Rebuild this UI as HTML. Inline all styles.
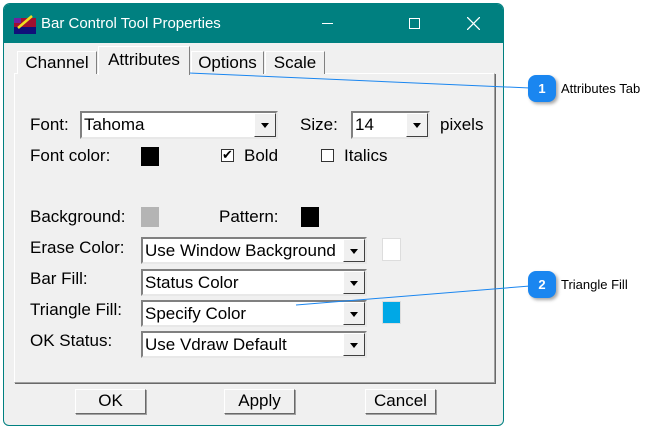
<!DOCTYPE html>
<html><head><style>
*{margin:0;padding:0;box-sizing:border-box}
body{width:657px;height:428px;background:#fff;position:relative;overflow:hidden;font-family:"Liberation Sans",sans-serif;font-size:17px;color:#000}
.a{position:absolute}
.win{left:3px;top:3px;width:501px;height:423px;background:#f0f0f0;border:1px solid #008080;border-radius:7px 7px 6px 6px;overflow:hidden}
.tb{left:0;top:0;width:501px;height:39px;background:#008080;color:#fff}
.t{white-space:nowrap;line-height:18px}
.combo{background:#fff;border:2px solid;border-color:#808080 #e8e8e8 #e8e8e8 #808080}
.combo span{position:absolute;left:2px;top:3px;line-height:18px}
.btn{position:absolute;right:0;top:0;width:22px;height:100%;background:#f0f0f0;border:1px solid;border-color:#fff #404040 #404040 #fff}
.btn:after{content:"";position:absolute;left:6px;top:9px;border-left:4px solid transparent;border-right:4px solid transparent;border-top:5px solid #000}
.pb{background:#f0f0f0;border:1px solid;border-color:#fff #696969 #696969 #fff;box-shadow:1px 1px 0 #a0a0a0;text-align:center;line-height:22px}
.tab{background:#f0f0f0;border:1px solid;border-color:#fff #808080 transparent #fff;border-bottom:none;text-align:center}
.cb{width:13px;height:13px;background:#fff;border:1px solid #333}
.badge{width:28px;height:27px;background:#1a86f0;border-radius:8px;color:#fff;font-weight:bold;font-size:13px;text-align:center;line-height:27px;box-shadow:2px 2px 3px rgba(0,0,0,.35)}
</style></head><body>
<div class="a win">
 <div class="a tb">
  <svg class="a" style="left:10px;top:10px" width="22" height="20"><rect x="0" y="4" width="22" height="16" fill="#a01030"/><rect x="0" y="13" width="22" height="7" fill="#10107a"/><rect x="0" y="4" width="7" height="5" fill="#7020a0"/><line x1="4" y1="14" x2="18" y2="2" stroke="#f0e020" stroke-width="2.5"/></svg>
  <div class="a t" style="left:37px;top:11px;font-size:15px">Bar Control Tool Properties</div>
  <div class="a" style="left:318px;top:19px;width:11px;height:1px;background:#fff"></div>
  <div class="a" style="left:405px;top:14px;width:11px;height:11px;border:1px solid #fff"></div>
  <svg class="a" style="left:463px;top:13px" width="13" height="13"><path d="M0 0L13 13M13 0L0 13" stroke="#fff" stroke-width="1.3"/></svg>
 </div>
 <div class="a" style="left:10px;top:69px;width:481px;height:310px;border:1px solid;border-color:#fff #a0a0a0 #a0a0a0 #fff;box-shadow:1px 1px 0 #696969"></div>
 <div class="a tab t" style="left:13px;top:47px;width:80px;height:23px;line-height:22px">Channel</div>
 <div class="a tab t" style="left:94px;top:42px;width:92px;height:29px;line-height:26px;z-index:2">Attributes</div>
 <div class="a tab t" style="left:187px;top:47px;width:73px;height:23px;line-height:22px">Options</div>
 <div class="a tab t" style="left:261px;top:47px;width:60px;height:23px;line-height:22px">Scale</div>

 <div class="a t" style="left:26px;top:112px">Font:</div>
 <div class="a combo" style="left:76px;top:107px;width:198px;height:28px"><span>Tahoma</span><div class="btn"></div></div>
 <div class="a t" style="left:296px;top:112px">Size:</div>
 <div class="a combo" style="left:347px;top:107px;width:79px;height:28px"><span>14</span><div class="btn"></div></div>
 <div class="a t" style="left:436px;top:112px">pixels</div>

 <div class="a t" style="left:26px;top:143px">Font color:</div>
 <div class="a" style="left:137px;top:143px;width:18px;height:19px;background:#000"></div>
 <div class="a cb" style="left:217px;top:145px"></div>
 <div class="a t" style="left:218px;top:142px;font-size:13px">✔</div>
 <div class="a t" style="left:240px;top:143px">Bold</div>
 <div class="a cb" style="left:317px;top:145px"></div>
 <div class="a t" style="left:340px;top:143px">Italics</div>

 <div class="a t" style="left:26px;top:204px">Background:</div>
 <div class="a" style="left:137px;top:203px;width:18px;height:20px;background:#b4b4b4"></div>
 <div class="a t" style="left:215px;top:204px">Pattern:</div>
 <div class="a" style="left:297px;top:203px;width:18px;height:20px;background:#000"></div>

 <div class="a t" style="left:26px;top:235px">Erase Color:</div>
 <div class="a combo" style="left:137px;top:233px;width:226px;height:27px"><span>Use Window Background</span><div class="btn"></div></div>
 <div class="a" style="left:378px;top:234px;width:19px;height:23px;background:#fff;border:1px solid #ddd"></div>
 <div class="a t" style="left:26px;top:266px">Bar Fill:</div>
 <div class="a combo" style="left:137px;top:265px;width:226px;height:27px"><span>Status Color</span><div class="btn"></div></div>
 <div class="a t" style="left:26px;top:297px">Triangle Fill:</div>
 <div class="a combo" style="left:137px;top:296px;width:226px;height:27px"><span>Specify Color</span><div class="btn"></div></div>
 <div class="a" style="left:378px;top:297px;width:19px;height:23px;background:#00a8e6;border:1px solid #ddd"></div>
 <div class="a t" style="left:26px;top:328px">OK Status:</div>
 <div class="a combo" style="left:137px;top:327px;width:226px;height:27px"><span>Use Vdraw Default</span><div class="btn"></div></div>

 <div class="a pb t" style="left:71px;top:385px;width:71px;height:25px">OK</div>
 <div class="a pb t" style="left:220px;top:385px;width:71px;height:25px">Apply</div>
 <div class="a pb t" style="left:361px;top:385px;width:71px;height:25px">Cancel</div>
</div>
<svg class="a" style="left:0;top:0" width="657" height="428"><line x1="143" y1="71" x2="530" y2="88" stroke="#1a86f0" stroke-width="1"/><line x1="296" y1="305" x2="530" y2="286" stroke="#1a86f0" stroke-width="1"/></svg>
<div class="a badge" style="left:528px;top:75px">1</div>
<div class="a t" style="left:561px;top:80px;font-size:13px">Attributes Tab</div>
<div class="a badge" style="left:528px;top:271px">2</div>
<div class="a t" style="left:561px;top:276px;font-size:13px">Triangle Fill</div>
</body></html>
